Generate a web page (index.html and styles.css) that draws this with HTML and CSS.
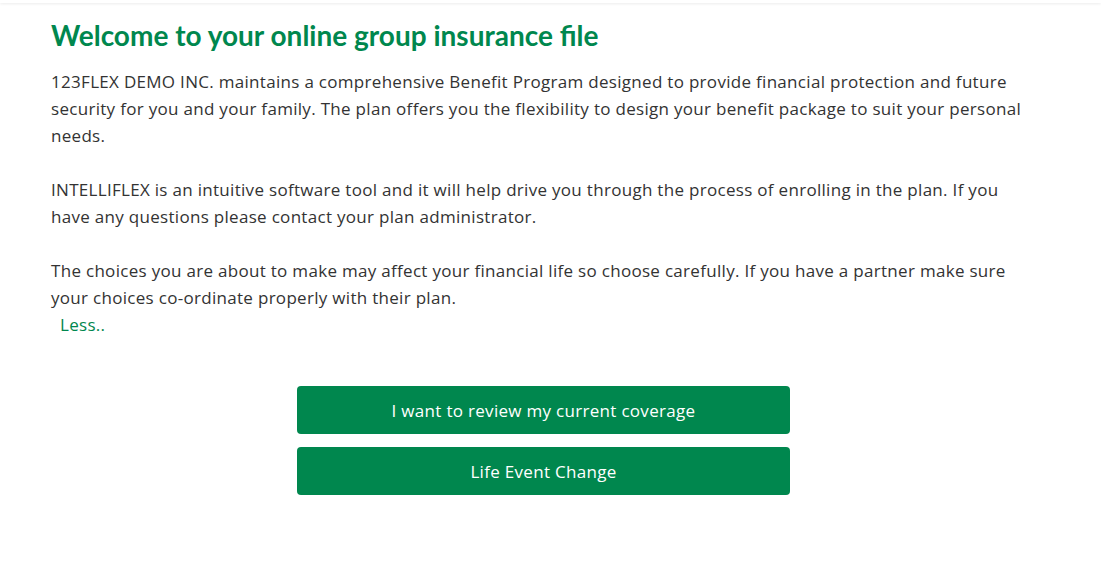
FILE: index.html
```html
<!DOCTYPE html>
<html lang="en">

<head>
  <meta charset="UTF-8">
  <meta name="viewport" content="width=device-width, initial-scale=1.0">
  <title>Welcome</title>
  <link rel="stylesheet" href="styles.css">
</head>

<body>
  <div class="topbar"></div>
  <main class="welcome">
    <h1>Welcome to your online group insurance file</h1>
    <p>123FLEX DEMO INC. maintains a comprehensive Benefit Program designed to provide financial protection and future security for you and your family. The plan offers you the flexibility to design your benefit package to suit your personal needs.</p>
    <p>INTELLIFLEX is an intuitive software tool and it will help drive you through the process of enrolling in the plan. If you have any questions please contact your plan administrator.</p>
    <p>The choices you are about to make may affect your financial life so choose carefully. If you have a partner make sure your choices co-ordinate properly with their plan.<br>
      <a href="#" class="less">Less..</a></p>

    <div class="actions">
      <button>I want to review my current coverage</button>
      <button>Life Event Change</button>
    </div>
  </main>
</body>

</html>
```

FILE: styles.css
```css
body {
  margin: 0;
  font-family: 'Open Sans', sans-serif;
  background-color: #fff;
  color: #333;
}

.topbar {
  height: 3px;
  background-color: #fff;
  box-shadow: 0 1px 3px rgba(0, 0, 0, 0.08);
}

.welcome {
  width: 985px;
  padding: 15px 0 0 51px;
}

h1 {
  margin: 0 0 16px;
  font-family: Lato, sans-serif;
  color: #00874e;
  font-size: 28px;
  line-height: 34px;
  font-weight: bold;
}

p {
  margin: 0 0 27px;
  font-size: 17px;
  line-height: 27px;
  letter-spacing: 0.3px;
}

.less {
  display: inline-block;
  margin-left: 9px;
  color: #00874e;
  text-decoration: none;
}

.actions {
  display: flex;
  flex-direction: column;
  align-items: center;
  gap: 13px;
  margin-top: 48px;
}

button {
  width: 493px;
  height: 48px;
  border: none;
  border-radius: 4px;
  background-color: #00874e;
  color: #fff;
  font-family: 'Open Sans', sans-serif;
  font-size: 17px;
  letter-spacing: 0.3px;
  cursor: pointer;
}
```
